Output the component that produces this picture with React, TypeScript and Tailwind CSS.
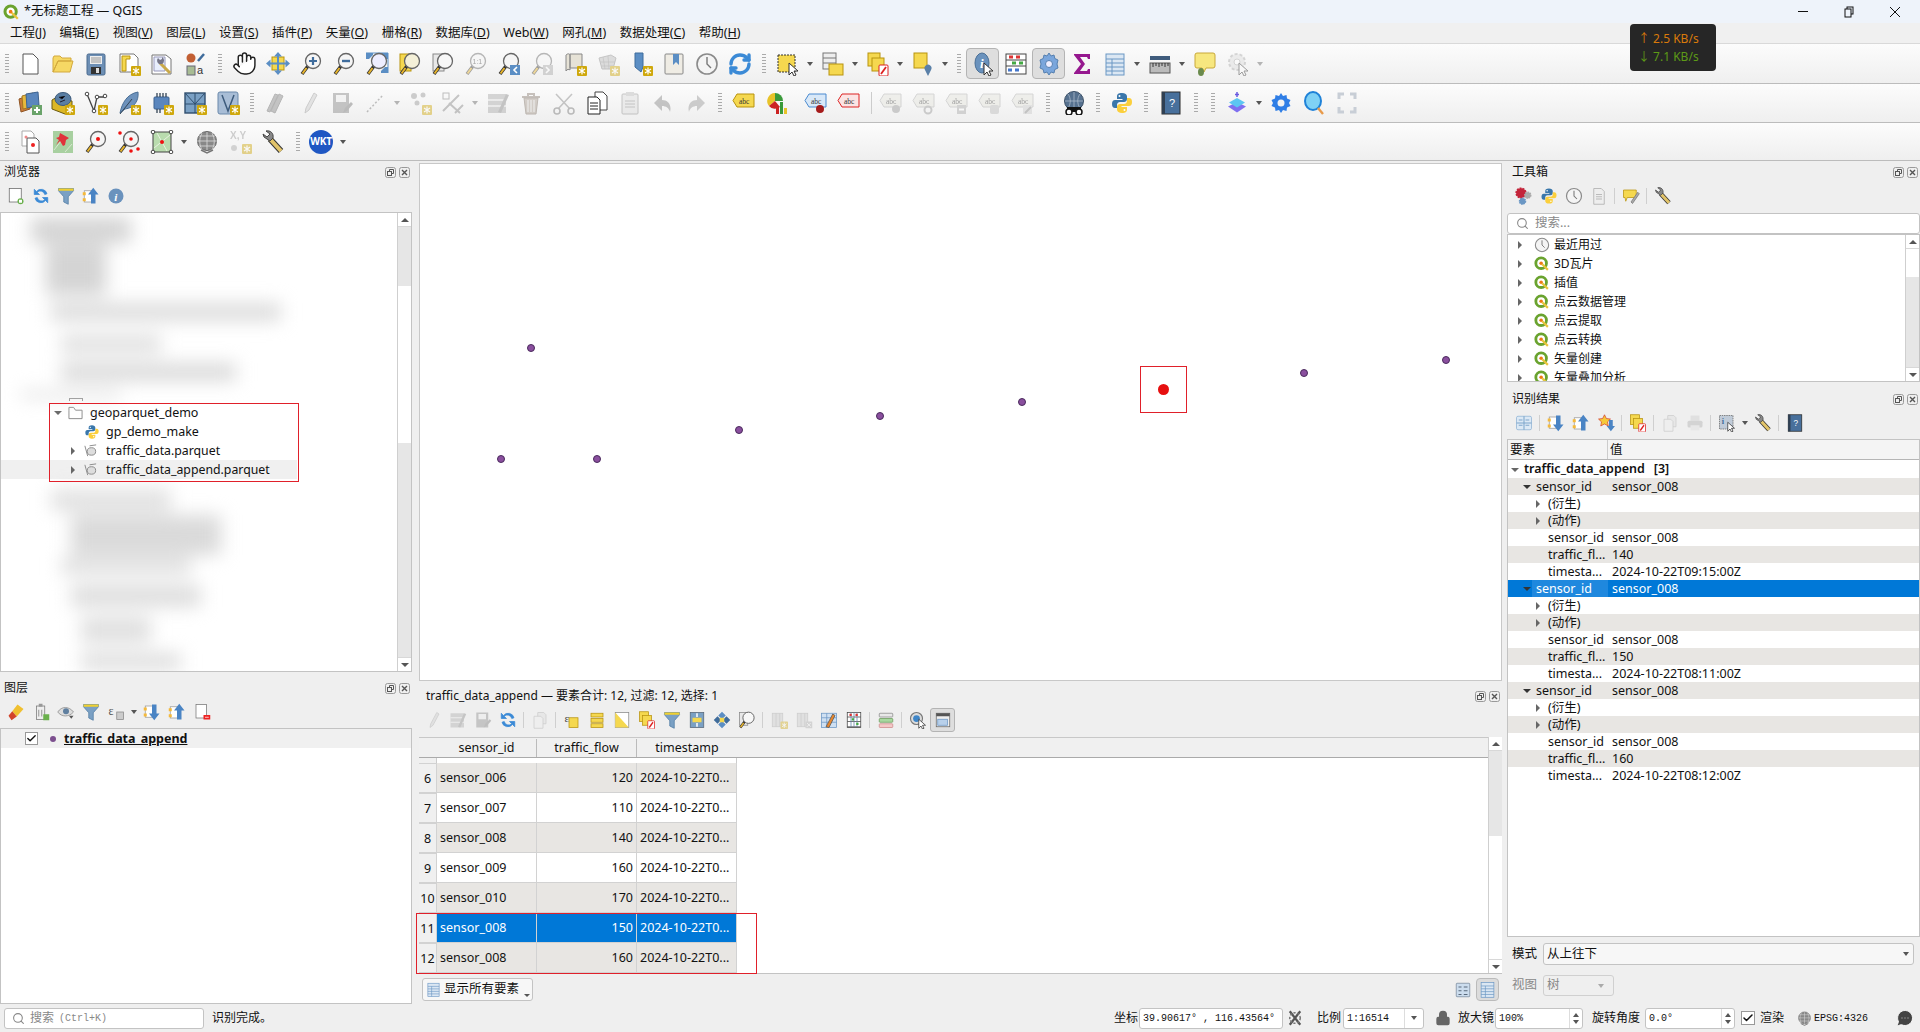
import { ReactNode } from "react";
import { Hand, RefreshCw, Search, Lock, Check, MessageCircleMore } from "lucide-react";
import clsx from "clsx";

const Y = "#f5d84f";
const YS = "#b8930f";
const B = "#5b8ec4";
const BD = "#3f6c9c";

const Star = (
  <g>
    <rect x="14" y="14" width="10" height="10" rx="1" fill="#cfa80c" />
    <path d="M19 15.5v7M16 17l6 4M22 17l-6 4" stroke="#fff" strokeWidth="1.2" />
  </g>
);
const mg = (c = "#f5f5f5") => (
  <g>
    <path d="M9 14L3 22" stroke="#333" strokeWidth="3.5" />
    <path d="M7.5 16L3.5 21.5" stroke="#e8b52c" strokeWidth="2" />
    <circle cx="14" cy="9" r="7.5" fill={c} stroke="#666" strokeWidth="1.3" />
  </g>
);
const Py = (
  <g>
    <path d="M12 2C8 2 7 3.5 7 5.5V8h5.5v1H5C3 9 2 10.5 2 13s1 4 3 4h2v-3c0-2 1.5-3 3-3h4c1.5 0 3-1 3-3V5.5C17 3.5 15 2 12 2z" fill="#3a77ab" />
    <path d="M12 2C8 2 7 3.5 7 5.5V8h5.5v1H5C3 9 2 10.5 2 13s1 4 3 4h2v-3c0-2 1.5-3 3-3h4c1.5 0 3-1 3-3V5.5C17 3.5 15 2 12 2z" fill="#fbcf3c" transform="rotate(180 12 12)" />
    <circle cx="9.5" cy="5" r="1" fill="#fff" />
    <circle cx="14.5" cy="19" r="1" fill="#fff" />
  </g>
);
const Qg = (
  <g>
    <circle cx="11.5" cy="11.5" r="7.5" fill="#fff" stroke="#6aa32f" strokeWidth="4" />
    <circle cx="11.5" cy="11.5" r="2.5" fill="#ee7913" />
    <path d="M13 13l8 8" stroke="#e8c33c" strokeWidth="3" />
  </g>
);
const abc = (c: string, f: string) => (
  <g>
    <path d="M5 3h17v13H5L1 9.5z" fill={f} stroke={c} />
    <text x="7" y="12.5" fontSize="7.5" fontFamily="Liberation Serif, serif" fill="#333">abc</text>
  </g>
);
const Gear = (
  <g>
    <path d="M12 2l2 3 3.5-1 .5 3.5L21.5 9 20 12l1.5 3-3.5 1.5-.5 3.5L14 19l-2 3-2-3-3.5 1L6 16.5 2.5 15 4 12 2.5 9 6 7.5 6.5 4 10 5z" fill="#2f7ee6" />
    <circle cx="12" cy="12" r="3.5" fill="#f2f2f2" />
  </g>
);
const Curs = <path d="M13 11l0 12 3-3 2 4 2-1-2-4h4z" fill="#fff" stroke="#333" />;

const ic: Record<string, ReactNode> = {
  new: <path d="M5 2h10l5 5v15H5z" fill="#fff" stroke="#555" />,
  open: <path d="M2 20V6l1-2h6l2 2h9v3H7L2 20zM2 20l5-11h15l-3 11z" fill="#f6d864" stroke="#d3a93d" />,
  save: <g><rect x="3" y="2" width="18" height="21" rx="1.5" fill="#6d8fb5" stroke="#4a6a8e" /><rect x="6" y="4" width="12" height="8" fill="#eee" /><path d="M7 6h10M7 8h10M7 10h10" stroke="#999" /><rect x="7" y="15" width="10" height="7" fill="#333" /><rect x="12" y="16" width="3" height="5" fill="#ddd" /></g>,
  layout: <g><path d="M3 2h14l4 4v14H3z" fill="#fff" stroke="#777" /><path d="M5 4h8v3H9v12H5z" fill={Y} stroke={YS} />{Star}</g>,
  manager: <g><path d="M2 3h14l5 4v15H2z" fill="#fff" stroke="#777" /><path d="M4 5h11v14H4z" fill="#e8eefc" stroke="#99b" /><path d="M10 11l10 10" stroke="#c9a94a" strokeWidth="3" /><path d="M9 12a4 4 0 0 1-1-6l2 2 2-1 0-2a4 4 0 0 1 0 7z" fill="#778" /></g>,
  style: <g><circle cx="8" cy="6" r="4.5" fill="#c25f33" /><path d="M15 9l6-7" stroke={BD} strokeWidth="2.5" /><rect x="4" y="14" width="8" height="9" fill="#a8bc94" stroke="#667" /><text x="14" y="22" fontSize="11" fill="#333" fontFamily="Liberation Sans">a</text></g>,
  pan: <g><rect x="6" y="5" width="12" height="13" fill={Y} stroke={YS} /><path d="M12 0l4 4.5H8zM12 23l4-4.5H8zM0 11.5L4.5 7.5v8zM24 11.5l-4.5-4v8z" fill={B} /><path d="M12 2v20M2 11.5h20" stroke={B} strokeWidth="2" /></g>,
  zoomIn: <g>{mg()}<path d="M14 5v8M10 9h8" stroke={BD} strokeWidth="2.2" /></g>,
  zoomOut: <g>{mg()}<path d="M10 9h8" stroke={BD} strokeWidth="2.4" /></g>,
  zoomFull: <g><path d="M1 1h7v2L4 7H1zM23 1h-7v2l4 4h3zM23 21h-7v-2l4-4h3z" fill={B} /><path d="M1 1h22v20" fill="none" stroke={B} />{mg("#eef")}</g>,
  zoomLayer: <g><rect x="2" y="2" width="11" height="17" fill={Y} stroke={YS} />{mg("#f4f0d8")}</g>,
  zoomSel: <g><rect x="2" y="2" width="11" height="17" fill="#e8e8e8" stroke="#888" />{mg("#f8f8f8")}</g>,
  zoom11: <g>{mg()}<text x="8.5" y="12" fontSize="7" fill="#444" fontFamily="Liberation Sans">1:1</text></g>,
  zoomLast: <g>{mg()}<rect x="13" y="13" width="10" height="10" fill={B} /><path d="M20 15l-3 3 3 3" stroke="#fff" strokeWidth="1.6" fill="none" /></g>,
  zoomNext: <g>{mg()}<rect x="13" y="13" width="10" height="10" fill="#aaa" /><path d="M16 15l3 3-3 3" stroke="#fff" strokeWidth="1.6" fill="none" /></g>,
  mapNew: <g><path d="M3 3c2-2 4-1 4 0v15c-1-1-3-1-4 1zM7 2h12v14H7z" fill="#e6e2d6" stroke="#888" />{Star}</g>,
  map3d: <g><path d="M3 6l12-3 5 3-3 11H6z" fill="#bcbcbc" stroke="#888" /><path d="M7 5l2 12M12 4l1 13M4 10h15M5 14h13" stroke="#888" strokeWidth=".7" />{Star}</g>,
  bmNew: <g><path d="M6 1h8v14l-2 5-6-5z" fill={B} stroke={BD} />{Star}</g>,
  bm: <g><rect x="3" y="2" width="18" height="20" rx="1" fill="#efece4" stroke="#888" /><path d="M11 2h6v11l-3-3-3 3z" fill={B} /></g>,
  clock: <g><circle cx="12" cy="12" r="10" fill="#f4f4f4" stroke="#8a8a8a" strokeWidth="1.6" /><path d="M12 5v7l4 4" stroke="#777" strokeWidth="1.4" fill="none" /></g>,
  select: <g><rect x="2" y="3" width="17" height="17" fill={Y} stroke="#333" strokeDasharray="2 1" />{Curs}</g>,
  selAttr: <g><rect x="2" y="1" width="13" height="16" fill="#eee" stroke="#777" /><path d="M2 6h13M2 11h13" stroke="#777" /><rect x="8" y="12" width="14" height="11" fill={Y} stroke={YS} /></g>,
  deselect: <g><rect x="2" y="1" width="12" height="13" fill={Y} stroke={YS} /><rect x="6" y="6" width="12" height="13" fill={Y} stroke={YS} /><rect x="13" y="13" width="9" height="11" rx="1" fill="#fff" stroke="#d22" /><path d="M15 22l5-7" stroke="#d22" strokeWidth="1.8" /></g>,
  selLoc: <g><rect x="3" y="1" width="13" height="15" fill={Y} stroke={YS} /><path d="M17 24l-3-6a3.5 3.5 0 1 1 6 0z" fill="#5a80a8" /></g>,
  identify: <g><ellipse cx="11" cy="11" rx="7" ry="10" fill="#6a92bd" stroke="#4a6f96" /><text x="9" y="15.5" fontSize="13" fontWeight="700" fill="#fff" fontStyle="italic" fontFamily="Liberation Serif">i</text>{Curs}</g>,
  abacus: <g><rect x="2" y="2" width="20" height="20" fill="#fff" stroke="#444" /><path d="M2 8h20M2 14h20" stroke="#444" /><path d="M5 5h4M12 5h4" stroke="#d33" strokeWidth="3" /><path d="M8 11h4M15 11h4" stroke="#4a4" strokeWidth="3" /><path d="M4 18h4M11 18h4" stroke="#47c" strokeWidth="3" /></g>,
  gearB: <g><path d="M12 1l2 3 3-1 .8 3.5L21 8l-1 4 1 4-3.2 1.5L17 21l-3-1-2 3-2-3-3 1-.8-3.5L3 16l1-4-1-4 3.2-1.5L7 3l3 1z" fill="#7aa6dc" stroke="#5680b0" /><circle cx="12" cy="12" r="3.5" fill="#eef" stroke="#5680b0" /></g>,
  sigma: <path d="M4 2h16v5h-2l-1-2H10l5 7-5 7h7l1-2h2v5H4v-1l7-9-7-9z" fill="#96188f" />,
  table: <g><rect x="3" y="2" width="18" height="21" fill="#dbe7f3" stroke="#6b97c4" /><path d="M3 7h18M3 11h18M3 15h18M3 19h18M9 7v16" stroke="#6b97c4" /></g>,
  measure: <g><rect x="2" y="4" width="20" height="4" fill="#3f5c7c" /><rect x="2" y="11" width="20" height="10" fill="#bbb" stroke="#555" /><path d="M5 11v4M8 11v3M11 11v4M14 11v3M17 11v4M20 11v3" stroke="#333" /></g>,
  tip: <g><path d="M4 1h16a2 2 0 0 1 2 2v11a2 2 0 0 1-2 2h-7l-2 4-2-4H4a2 2 0 0 1-2-2V3a2 2 0 0 1 2-2z" fill="#f7e77f" stroke="#c8a83a" /><ellipse cx="8" cy="20" rx="3" ry="4" fill="#6a8a4c" /></g>,
  gearG: <g><circle cx="11" cy="10" r="8" fill="#ddd" stroke="#aaa" strokeDasharray="3 2" strokeWidth="2" /><circle cx="11" cy="10" r="3" fill="#fff" stroke="#aaa" />{Curs}</g>,
  addLayer: <g><path d="M1 8l11-4v14L3 21z" fill="#c97a3a" stroke="#8f5524" /><path d="M4 5l11-3v14L5 18z" fill="#e6b93d" stroke="#a47621" /><path d="M8 3l12-2 1 13-12 3z" fill="#5a86bd" stroke="#3d6391" /><rect x="14" y="14" width="10" height="10" fill="#6aa36a" /><path d="M19 16v6M16 19h6" stroke="#fff" strokeWidth="2" /></g>,
  gpkg: <g><path d="M1 9l5-3 15 4v11l-7 2-13-5z" fill="#dcb725" stroke="#6a5a10" /><ellipse cx="12" cy="8" rx="8" ry="6.5" fill="#5a7ea3" stroke="#3d5b7c" /><path d="M8 6l3 2 3-3M9 11l5-2" stroke="#223" />{Star}</g>,
  vec: <g><path d="M3 3l7 17 3-14h8" fill="none" stroke="#444" strokeWidth="1.3" /><circle cx="3" cy="3" r="1.8" fill="#fff" stroke="#444" /><circle cx="10" cy="20" r="1.8" fill="#fff" stroke="#444" /><circle cx="13" cy="6" r="1.8" fill="#fff" stroke="#444" /><circle cx="21" cy="5" r="1.8" fill="#fff" stroke="#444" />{Star}</g>,
  feather: <g><path d="M3 22C5 12 10 3 21 1c1 9-4 16-13 17z" fill="#6d92bc" stroke="#4a6f96" /><path d="M3 23L15 8" stroke="#345" />{Star}</g>,
  chip: <g><rect x="4" y="6" width="15" height="12" rx="1" fill="#5a86bd" stroke="#3d6391" /><path d="M7 2v4M10 2v4M13 2v4M16 2v4M7 18v4M10 18v4" stroke="#345" strokeWidth="1.3" />{Star}</g>,
  mesh: <g><rect x="2" y="2" width="20" height="20" fill="#7aa0c4" stroke="#2f4e6e" strokeWidth="1.4" /><path d="M2 13h20M12 2v20M2 2l10 11M22 2L12 13" stroke="#2f4e6e" />{Star}</g>,
  virt: <g><rect x="2" y="1" width="20" height="22" rx="2" fill="#a8bdd6" stroke="#6a89ab" /><path d="M6 4l6 16 6-16" fill="none" stroke="#3d5b7c" strokeWidth="1.5" />{Star}</g>,
  pencils: <path d="M7 20L15 3l4 2-8 17zM3 20L11 3l3 1-8 17z" fill="#888" stroke="#666" />,
  pencil: <path d="M8 22l1-5L17 2l3 2-8 15z" fill="#ccc" stroke="#999" />,
  saveEd: <g><rect x="3" y="2" width="16" height="20" fill="#888" /><rect x="6" y="4" width="10" height="7" fill="#eee" /><path d="M13 22l2-5 6-6 2 2-6 7z" fill="#777" /></g>,
  line: <path d="M4 21L20 4" stroke="#777" strokeDasharray="2 2" strokeWidth="1.5" />,
  pts: <g><circle cx="6" cy="5" r="3" fill="#999" /><circle cx="15" cy="4" r="2.5" fill="#999" /><circle cx="9" cy="12" r="2.5" fill="#999" />{Star}</g>,
  edit: <g><rect x="2" y="2" width="6" height="6" fill="none" stroke="#777" /><path d="M2 20L18 4M8 12l11 10M14 22l8-8" stroke="#888" strokeWidth="2" /></g>,
  tblPen: <g><rect x="2" y="3" width="18" height="19" fill="#aaa" /><path d="M2 9h18M2 15h18" stroke="#eee" strokeWidth="1.5" /><path d="M12 21L20 3l3 1-8 18z" fill="#888" /></g>,
  trash: <g><path d="M3 6h18M9 6V3h6v3" stroke="#8a7d72" strokeWidth="2" fill="none" /><path d="M5 7h14l-2 16H7z" fill="#a89c90" stroke="#7a6d60" /><path d="M9 9v12M12 9v12M15 9v12" stroke="#eee" /></g>,
  cut: <g><path d="M4 3l14 15M20 3L6 18" stroke="#888" strokeWidth="1.6" /><circle cx="5" cy="20" r="3" fill="none" stroke="#777" strokeWidth="1.6" /><circle cx="19" cy="20" r="3" fill="none" stroke="#777" strokeWidth="1.6" /></g>,
  copy: <g><path d="M10 1h8l4 4v14H10z" fill="#fff" stroke="#444" /><path d="M3 6h9l3 3v14H3z" fill="#fff" stroke="#222" /><path d="M5 12h8M5 15h8M5 18h8" stroke="#222" /></g>,
  paste: <g><rect x="4" y="3" width="16" height="20" rx="1" fill="#ddd" stroke="#888" /><rect x="8" y="1" width="8" height="4" fill="#bbb" /><path d="M7 10h10M7 13h10M7 16h10" stroke="#888" /></g>,
  undo: <path d="M11 4L3 12l8 8v-5c4 0 7 2 8 6 2-7-2-12-8-12z" fill="#888" />,
  redo: <path d="M13 4l8 8-8 8v-5c-4 0-7 2-8 6-2-7 2-12 8-12z" fill="#999" />,
  abcY: abc("#b8930f", Y),
  diagram: <g><path d="M10 2a8 8 0 0 1 8 8h-8z" fill="#3a9a3a" /><path d="M10 2a8 8 0 0 0-6 13l6-5z" fill="#e8c32a" /><path d="M4 15a8 8 0 0 0 11 1l-5-6z" fill="#c22" /><rect x="11" y="15" width="3" height="8" fill="#c22" /><rect x="15" y="11" width="3" height="12" fill="#3a9a3a" /><rect x="19" y="17" width="3" height="6" fill="#e8c32a" /></g>,
  abcPin: <g>{abc("#4a8ad0", "#d8e8f8")}<circle cx="16" cy="18" r="4" fill="#a61b1b" /></g>,
  abcRed: abc("#d22", "#fbe4e4"),
  abcG1: <g>{abc("#aaa", "#e4e4dc")}<circle cx="17" cy="18" r="4" fill="#999" /></g>,
  abcG2: <g>{abc("#aaa", "#e4e4dc")}<circle cx="16" cy="19" r="3.5" fill="none" stroke="#999" strokeWidth="2" /></g>,
  abcG3: <g>{abc("#aaa", "#e4e4dc")}<rect x="12" y="14" width="9" height="9" fill="#aaa" /><path d="M14 18.5h5" stroke="#fff" strokeWidth="2" /></g>,
  abcG4: <g>{abc("#aaa", "#e4e4dc")}<rect x="12" y="14" width="9" height="9" rx="2" fill="#bbb" /></g>,
  abcG5: <g>{abc("#aaa", "#e4e4dc")}<rect x="12" y="14" width="9" height="9" fill="#ccc" /><path d="M14 22l6-6" stroke="#888" strokeWidth="2" /></g>,
  globeBin: <g><circle cx="12" cy="10" r="9.5" fill="#56718f" stroke="#3a4f66" /><path d="M3 10h18M12 1v18M6 3c3 4 3 10 0 14M18 3c-3 4-3 10 0 14" stroke="#a9b9c9" strokeWidth=".8" fill="none" /><path d="M5 16h14v5H5z" fill="#111" /><circle cx="7" cy="21" r="3" fill="#fff" stroke="#111" strokeWidth="1.5" /><circle cx="17" cy="21" r="3" fill="#fff" stroke="#111" strokeWidth="1.5" /></g>,
  py: Py,
  help: <g><rect x="3" y="1" width="18" height="22" fill="#48709c" stroke="#2b2b2b" /><rect x="3" y="1" width="3" height="22" fill="#2f3f52" /><text x="10" y="16" fontSize="11" fill="#fff" fontFamily="Liberation Sans">?</text></g>,
  plug: <g><path d="M12 11l9 4.5-9 6-9-6z" fill="#7f6ff0" /><path d="M12 7l8 4.5-8 5-8-5z" fill="#5cc6f2" /><path d="M12 1v5M10 3.5h4" stroke="#6a5ae0" strokeWidth="1.5" /></g>,
  gearQ: Gear,
  searchB: <g><ellipse cx="11" cy="10" rx="8" ry="9" fill="#7fd1f5" stroke="#1f82d8" strokeWidth="2" /><path d="M16 17l5 6" stroke="#e89a4a" strokeWidth="2.4" /></g>,
  full: <path d="M4 8V3h5M15 3h5v5M20 16v5h-5M9 21H4v-5" fill="none" stroke="#c8ced6" strokeWidth="3" />,
  copyPts: <g><path d="M4 1h9l3 3v12H4z" fill="#fff" stroke="#aaa" /><path d="M9 8h9l3 3v12H9z" fill="#fff" stroke="#555" /><circle cx="15" cy="15" r="2" fill="#e22" /><circle cx="8" cy="7" r="1.5" fill="#e88" /></g>,
  pin: <g><path d="M2 1h20v22H2z" fill="#a8d0a0" /><path d="M3 20l7-9M14 22l7-8" stroke="#d8e8d0" /><path d="M9 3l9 5-3 2-1 5-2 1-3-5-4 4 3-5-3-2 3-1z" fill="#e0323a" /></g>,
  magDot: <g>{mg()}<circle cx="14" cy="9" r="2" fill="#e11" /></g>,
  magDots: <g>{mg()}<circle cx="14" cy="9" r="1.8" fill="#e11" /><circle cx="3" cy="3" r="1.8" fill="#e11" /><circle cx="21" cy="19" r="1.8" fill="#e11" /><circle cx="14" cy="21" r="1.8" fill="#e11" /></g>,
  extent: <g><rect x="3" y="2" width="18" height="20" fill="#b9dcae" stroke="#444" /><path d="M4 18L20 5M7 3l10 18" stroke="#e8f2e0" /><circle cx="12" cy="12" r="2" fill="#e11" /><circle cx="3" cy="2" r="1.8" fill="#fff" stroke="#444" /><circle cx="21" cy="2" r="1.8" fill="#fff" stroke="#444" /><circle cx="3" cy="22" r="1.8" fill="#fff" stroke="#444" /><circle cx="21" cy="22" r="1.8" fill="#fff" stroke="#444" /></g>,
  globeG: <g><circle cx="12" cy="11" r="9.5" fill="#888" stroke="#666" /><path d="M2 11h20M4 6h16M4 16h16M12 2v18M7 3c-3 6-3 11 0 17M17 3c3 6 3 11 0 17" stroke="#ddd" strokeWidth=".8" fill="none" /><path d="M6 20l6 3 6-3" stroke="#777" strokeWidth="1.5" fill="none" /></g>,
  xy: <g><text x="2" y="9" fontSize="10" fontWeight="700" fill="#999" fontFamily="Liberation Sans">X,Y</text><circle cx="6" cy="18" r="3" fill="#aaa" />{Star}</g>,
  wrench: <g><path d="M9 9l11 12" stroke="#333" strokeWidth="6" /><path d="M9 9l11 12" stroke="#e2c46a" strokeWidth="4" /><path d="M9 11L3 7l-1-3 4 3 3-3-4-3c4-1 8 2 7 7z" fill="#888" stroke="#444" /></g>,
  collapse: <g><rect x="2" y="3" width="20" height="18" rx="2" fill="#dce9f5" stroke="#8db2d3" /><path d="M5 8h5M5 15h5M14 8h5M14 15h5M2 12h20M12 3v18" stroke="#7da6cb" strokeWidth="1.4" /></g>,
  down: <g><rect x="3" y="4" width="10" height="15" fill="#fff" stroke="#999" /><rect x="1" y="6" width="4" height="4" fill="#f5b93a" /><rect x="1" y="14" width="4" height="4" fill="#f5b93a" /><path d="M12 2h6v12h4l-7 9-7-9h4z" fill="#4a84c4" /></g>,
  up: <g><rect x="3" y="5" width="10" height="15" fill="#fff" stroke="#999" /><rect x="1" y="7" width="4" height="4" fill="#f5b93a" /><rect x="1" y="15" width="4" height="4" fill="#f5b93a" /><path d="M12 22h6V10h4L15 1 8 10h4z" fill="#4a84c4" /></g>,
  starD: <g><path d="M10 1l2.5 5 5.5.7-4 3.8 1 5.5-5-2.7-5 2.7 1-5.5-4-3.8 5.5-.7z" fill="#f5c93a" stroke="#c22" strokeWidth=".8" /><path d="M16 8h5v8h3l-5.5 7-5.5-7h3z" fill="#4a84c4" /></g>,
  print: <g><rect x="6" y="2" width="12" height="7" fill="#ccc" /><rect x="2" y="9" width="20" height="9" rx="2" fill="#aaa" /><rect x="6" y="15" width="12" height="7" fill="#ddd" /></g>,
  identSel: <g><rect x="2" y="2" width="18" height="18" fill="#c0cbd8" stroke="#666" strokeDasharray="2 1" /><text x="5" y="13" fontSize="11" fontWeight="700" fill="#3f6c9c" fontFamily="Liberation Serif">i</text>{Curs}</g>,
  procs: <g><circle cx="8" cy="8" r="6.5" fill="#c3243a" stroke="#c3243a" strokeDasharray="2.5 1.5" strokeWidth="2" /><circle cx="17" cy="11" r="4" fill="#aaa" stroke="#aaa" strokeDasharray="2 1" strokeWidth="2" /><circle cx="10" cy="19" r="4" fill="#6b97c4" stroke="#6b97c4" strokeDasharray="2 1" strokeWidth="2" /></g>,
  page: <g><path d="M5 2h10l4 4v17H5z" fill="#eee" stroke="#aaa" /><path d="M8 10h8M8 13h8M8 16h8" stroke="#aaa" /></g>,
  tipPen: <g><path d="M2 4h17v10H7l-2 5-1-5H2z" fill={Y} stroke={YS} /><path d="M12 20L21 7l2 2-9 13z" fill="#aaa" stroke="#777" /></g>,
  newBox: <g><rect x="3" y="2" width="16" height="18" fill="#fff" stroke="#666" /><circle cx="18" cy="19" r="4" fill="#6ab04c" /><rect x="16" y="17" width="4" height="4" fill="#fff" /></g>,
  filter: <g><path d="M2 2h20v3l-7 8v10l-6-3v-7L2 5z" fill="#7aa0c4" stroke="#4f7ba3" /><rect x="2" y="2" width="20" height="3" fill="#f0d030" /></g>,
  info: <g><circle cx="12" cy="12" r="10" fill="#6a92bd" /><text x="9.5" y="18" fontSize="15" fontWeight="700" fontStyle="italic" fill="#fff" fontFamily="Liberation Serif">i</text></g>,
  brush: <g><path d="M14 2l8 6-9 10-6-7z" fill="#f0c030" /><path d="M7 11l6 7-7 5-4-6z" fill="#d2432a" /></g>,
  addGroup: <g><rect x="6" y="4" width="11" height="18" fill="#eee" stroke="#777" /><rect x="9" y="1" width="5" height="4" fill="#999" /><path d="M9 9v9M13 9v9" stroke="#777" /><rect x="15" y="15" width="8" height="8" fill="#6ab04c" /></g>,
  eye: <g><path d="M1 12c5-8 15-8 21 0-6 7-16 7-21 0z" fill="#ddd" stroke="#888" /><circle cx="12" cy="11" r="4" fill="#5f7f9f" /><path d="M16 17l3 4 3-4" fill="#555" /></g>,
  noRender: <g><path d="M5 3l14 18M19 3L5 21" stroke="#555" strokeWidth="3" /><circle cx="12" cy="12" r="7" fill="none" stroke="#777" strokeWidth="2" strokeDasharray="3 2" /></g>,
  expr: <g><text x="2" y="16" fontSize="16" fontFamily="Liberation Serif" fill="#555">ε</text><rect x="13" y="12" width="9" height="10" fill="#ccc" stroke="#888" /></g>,
  exprY: <g><rect x="8" y="9" width="12" height="13" fill={Y} stroke={YS} /><text x="2" y="14" fontSize="15" fontFamily="Liberation Serif" fill="#444">ε</text></g>,
  remove: <g><rect x="4" y="2" width="14" height="18" fill="#fff" stroke="#777" /><rect x="14" y="16" width="9" height="6" fill="#e22" /><path d="M16 19h5" stroke="#fff" /></g>,
  copyG: <g><path d="M9 2h8l3 3v12H9z" fill="#ddd" stroke="#999" /><path d="M4 7h9l3 3v13H4z" fill="#eee" stroke="#999" /></g>,
  bars: <g><rect x="4" y="3" width="16" height="5" fill={Y} stroke={YS} /><rect x="4" y="10" width="16" height="5" fill={Y} stroke={YS} /><rect x="4" y="17" width="16" height="5" fill={Y} stroke={YS} /></g>,
  invert: <g><rect x="3" y="2" width="18" height="20" fill="#fff" stroke="#888" /><path d="M3 2l18 20H3z" fill={Y} /></g>,
  moveSel: <g><rect x="3" y="2" width="18" height="20" fill="#7aa0c4" stroke="#567" /><rect x="6" y="9" width="12" height="6" fill={Y} /><path d="M12 3v5M12 16v5" stroke="#fff" strokeWidth="2" /></g>,
  panSel: <g><path d="M12 1l5 5-5 5-5-5zM12 13l5 5-5 5-5-5z" fill={B} /><path d="M6 7l5 5-5 5-5-5zM18 7l5 5-5 5-5-5z" fill={BD} /><rect x="9" y="9" width="6" height="6" fill={Y} /></g>,
  newCol: <g><rect x="3" y="3" width="14" height="18" fill="#ccc" stroke="#999" /><path d="M8 3v18M13 3v18" stroke="#999" />{Star}</g>,
  delCol: <g><rect x="3" y="3" width="14" height="18" fill="#ccc" stroke="#999" /><path d="M8 3v18M13 3v18" stroke="#999" /><rect x="14" y="14" width="9" height="9" fill="#aaa" /><path d="M16 16l5 5M21 16l-5 5" stroke="#fff" /></g>,
  calcPen: <g><rect x="2" y="3" width="20" height="19" fill="#cfe0f2" stroke="#6b97c4" /><path d="M2 9h20M2 15h20M9 3v19" stroke="#6b97c4" /><path d="M8 21L17 4l3 2-8 16z" fill="#e8872e" stroke="#555" /></g>,
  calc: <g><rect x="3" y="2" width="18" height="20" fill="#fff" stroke="#444" /><path d="M3 8h18M3 14h18M3 21h18" stroke="#444" /><path d="M8 2v19M12 2v19M16 2v19" stroke="#5f7fa8" /><path d="M6 5h3M14 5h3" stroke="#d33" strokeWidth="3" /><path d="M9 11h3M15 17h3" stroke="#4a4" strokeWidth="3" /></g>,
  cols: <g><rect x="3" y="3" width="18" height="5" rx="1" fill="#e8e8e8" stroke="#888" /><rect x="3" y="10" width="18" height="5" rx="1" fill="#a8d8a0" stroke="#6a9a5a" /><rect x="3" y="17" width="18" height="5" rx="1" fill="#f4c8c8" stroke="#c88" /></g>,
  magCur: <g><circle cx="10" cy="10" r="8" fill="#ddd" stroke="#777" strokeWidth="1.5" /><circle cx="10" cy="10" r="4.5" fill="#3f86c8" />{Curs}</g>,
  tblDock: <g><rect x="3" y="3" width="18" height="18" fill="#eee" stroke="#666" /><rect x="3" y="3" width="18" height="4" fill="#555" /><rect x="5" y="11" width="13" height="8" fill="#b8d0ea" stroke="#6b97c4" /></g>,
  tblForm: <g><rect x="3" y="3" width="18" height="18" rx="1" fill="#cde" stroke="#789" /><path d="M6 8h4M13 8h5M6 13h4M13 13h5M6 18h4M13 18h5" stroke="#567" strokeWidth="1.3" /></g>,
  refresh2: <g><path d="M20 9a8 8 0 0 0-14-3L3 3v7h7L7 7a6 6 0 0 1 10 3zM4 15a8 8 0 0 0 14 3l3 3v-7h-7l3 3a6 6 0 0 1-10-3z" fill="#3b8ad6" stroke="#3b8ad6" /></g>,
};

const Ico = ({ i, className }: { i: string; className?: string }) => (
  <svg viewBox="0 0 24 24" className={clsx("shrink-0", className ?? "h-6 w-6")}>
    {ic[i]}
  </svg>
);

// big toolbar button
const Btn = ({ i, off, on }: { i?: string; off?: boolean; on?: boolean }) => (
  <div className={clsx("flex h-[31px] w-[33px] shrink-0 items-center justify-center rounded-sm", on && "border border-[#b4b4b4] bg-[#dedede]")}>
    {i === "hand" ? (
      <Hand size={25} fill="#fff" stroke="#222" strokeWidth={1.4} />
    ) : i === "refresh" ? (
      <RefreshCw size={24} stroke="#3b8ad6" strokeWidth={3.4} />
    ) : (
      <Ico i={i ?? "new"} className={clsx("h-6 w-6", off && "opacity-45")} />
    )}
  </div>
);

// little triangle next to a button
const Dd = ({ off, className }: { off?: boolean; className?: string }) => (
  <div className={clsx("flex shrink-0 items-center justify-center", className ?? "w-[12px]")}>
    <div className={clsx("h-0 w-0 border-x-[3.5px] border-t-[4px] border-x-transparent", off ? "border-t-[#b4b4b4]" : "border-t-[#555]")} />
  </div>
);

const Grip = ({ className }: { className?: string }) => (
  <div className={clsx("flex shrink-0 justify-center", className ?? "w-[15px]")}>
    <div className="h-[22px] w-[4px] bg-[radial-gradient(#aaa_0.6px,transparent_0.8px)] bg-[length:2px_3px]" />
  </div>
);

const Bar = ({ children, className }: { children: ReactNode; className?: string }) => (
  <div className={clsx("flex shrink-0 items-center border-b border-[#bcbcbc] bg-linear-to-b from-[#fcfcfc] to-[#efefef] pl-px", className)}>{children}</div>
);

const DockTitle = ({ title, className }: { title: string; className?: string }) => (
  <div className={clsx("flex h-[22px] shrink-0 items-center justify-between text-[12px] text-[#111]", className)}>
    <span>{title}</span>
    <div className="flex gap-[3px] pr-[2px]">
      <svg viewBox="0 0 11 11" className="h-[11px] w-[11px]" fill="none" stroke="#555">
        <rect x=".5" y=".5" width="10" height="10" rx="2" stroke="#999" />
        <rect x="2.5" y="4.5" width="4" height="4" />
        <path d="M4.5 4V2.5h4v4H7" />
      </svg>
      <svg viewBox="0 0 11 11" className="h-[11px] w-[11px]" fill="none" stroke="#555">
        <rect x=".5" y=".5" width="10" height="10" rx="2" stroke="#999" />
        <path d="M3 3l5 5M8 3l-5 5" strokeWidth="1.4" />
      </svg>
    </div>
  </div>
);

// small toolbar of a dock: "~name" disabled, "!name" pressed, 0 separator, 1 drop arrow
const Tb = ({ items, className }: { items: (string | number)[]; className?: string }) => (
  <div className={clsx("flex h-[29px] shrink-0 items-center pb-[3px]", className)}>
    {items.map((it, n) =>
      typeof it === "number" ? (
        it === 0 ? (
          <div key={n} className="mx-[3px] h-[16px] w-px shrink-0 bg-[#cfcfcf]" />
        ) : (
          <Dd key={n} className="w-[11px]" />
        )
      ) : (
        <div key={n} className={clsx("flex h-[24px] w-[25px] shrink-0 items-center justify-center", it.startsWith("!") && "rounded-[3px] border border-[#b4b4b4] bg-[#dedede]")}>
          <Ico i={it.replace(/[~!]/, "")} className={clsx("h-[18px] w-[18px]", it.startsWith("~") && "opacity-40")} />
        </div>
      ),
    )}
  </div>
);

const Arrow = ({ open, light, className }: { open?: boolean; light?: boolean; className?: string }) => (
  <div className={clsx("flex h-[9px] w-[9px] shrink-0 items-center justify-center", className)}>
    {open ? (
      <div className={clsx("h-0 w-0 border-x-[4px] border-t-[4px] border-x-transparent", light ? "border-t-[#333]" : "border-t-[#666]")} />
    ) : (
      <div className="h-0 w-0 border-y-[4px] border-l-[4px] border-y-transparent border-l-[#666]" />
    )}
  </div>
);

const VScroll = ({ children }: { children: ReactNode }) => (
  <div className="flex w-[14px] shrink-0 flex-col border-l border-[#cfcfcf] bg-white">
    <div className="flex h-[14px] shrink-0 items-center justify-center border-b border-[#d8d8d8]">
      <div className="h-0 w-0 border-x-[4px] border-b-[4px] border-x-transparent border-b-[#555]" />
    </div>
    <div className="flex min-h-0 flex-1 flex-col">{children}</div>
    <div className="flex h-[14px] shrink-0 items-center justify-center border-t border-[#d8d8d8]">
      <div className="h-0 w-0 border-x-[4px] border-t-[4px] border-x-transparent border-t-[#555]" />
    </div>
  </div>
);

const MENUS: [string, string][] = [
  ["工程", "J"], ["编辑", "E"], ["视图", "V"], ["图层", "L"], ["设置", "S"], ["插件", "P"], ["矢量", "O"], ["栅格", "R"], ["数据库", "D"], ["Web", "W"], ["网孔", "M"], ["数据处理", "C"], ["帮助", "H"],
];

const POINTS = [
  [111, 184], [81, 295], [177, 295], [319, 266], [460, 252], [602, 238], [884, 209], [1026, 196],
];

const TABLE = [
  ["6", "sensor_006", "120"], ["7", "sensor_007", "110"], ["8", "sensor_008", "140"], ["9", "sensor_009", "160"], ["10", "sensor_010", "170"], ["11", "sensor_008", "150"], ["12", "sensor_008", "160"],
];

const TOOLBOX: [string, boolean][] = [
  ["最近用过", false], ["3D瓦片", true], ["插值", true], ["点云数据管理", true], ["点云提取", true], ["点云转换", true], ["矢量创建", true], ["矢量叠加分析", true],
];

const feature = (sel: boolean, flow: string, time: string) => [
  { arrow: 1, label: "sensor_id", value: "sensor_008", sel },
  { arrow: 2, label: "(衍生)" },
  { arrow: 2, label: "(动作)" },
  { label: "sensor_id", value: "sensor_008" },
  { label: "traffic_fl...", value: flow },
  { label: "timesta...", value: time },
];
const RESULTS: { arrow?: number; label: string; value?: string; sel?: boolean }[] = [
  ...feature(false, "140", "2024-10-22T09:15:00Z"),
  ...feature(true, "150", "2024-10-22T08:11:00Z"),
  ...feature(false, "160", "2024-10-22T08:12:00Z"),
];

const mono = "font-['Liberation_Mono','Noto_Sans_CJK_SC',monospace] text-[10px]";
const Spin = () => (
  <div className="flex h-full w-[13px] flex-col items-center justify-center gap-[3px] border-l border-[#ddd]">
    <div className="h-0 w-0 border-x-[3px] border-b-[4px] border-x-transparent border-b-[#555]" />
    <div className="h-0 w-0 border-x-[3px] border-t-[4px] border-x-transparent border-t-[#555]" />
  </div>
);

const App = () => {
  return (
    <div className="flex h-[1032px] w-[1920px] flex-col overflow-hidden bg-[#efefef] font-['Noto_Sans','Noto_Sans_CJK_SC',sans-serif] text-[13px] text-[#111]">
      {/* title bar */}
      <div className="flex h-[23px] shrink-0 items-center bg-[#eef3fa] pl-[2px]">
        <svg viewBox="0 0 24 24" className="h-[18px] w-[18px]">{Qg}</svg>
        <span className="ml-[4px] text-[12.5px]">*无标题工程 — QGIS</span>
        <div className="ml-auto flex items-center gap-[35px] pr-[20px]">
          <div className="h-px w-[10px] bg-[#111]" />
          <svg viewBox="0 0 12 12" className="h-[12px] w-[12px]" fill="#eef3fa" stroke="#111">
            <rect x="4" y="1" width="6" height="7" />
            <rect x="2" y="3" width="6" height="8" />
          </svg>
          <svg viewBox="0 0 10 10" className="h-[10px] w-[10px]" stroke="#111">
            <path d="M0 0l10 10M10 0L0 10" />
          </svg>
        </div>
      </div>
      {/* menu */}
      <div className="relative flex h-[21px] shrink-0 items-center gap-[13.6px] border-b border-[#d9d9d9] bg-[#f0f0f0] pl-[10px] pt-px text-[12.5px]">
        {MENUS.map(([m, k]) => (
          <span key={k}>
            {m}(<u>{k}</u>)
          </span>
        ))}
        <div className="absolute left-[1630px] top-px z-10 flex h-[47px] w-[86px] flex-col justify-center gap-[2px] rounded-sm bg-[#262626] pl-[8px] text-[12px] leading-[16px]">
          <span className="text-[#d97a0a]">↑ 2.5 KB/s</span>
          <span className="text-[#5d9a16]">↓ 7.1 KB/s</span>
        </div>
      </div>
      {/* toolbars */}
      <Bar className="h-[40px]">
        <Grip className="w-[12px]" />
        <Btn i="new" /><Btn i="open" /><Btn i="save" /><Btn i="layout" /><Btn i="manager" /><Btn i="style" />
        <Grip className="w-[17px]" />
        <Btn i="hand" /><Btn i="pan" /><Btn i="zoomIn" /><Btn i="zoomOut" /><Btn i="zoomFull" /><Btn i="zoomLayer" /><Btn i="zoomSel" /><Btn i="zoom11" off /><Btn i="zoomLast" /><Btn i="zoomNext" off /><Btn i="mapNew" /><Btn i="map3d" off /><Btn i="bmNew" /><Btn i="bm" /><Btn i="clock" /><Btn i="refresh" />
        <Grip />
        <Btn i="select" /><Dd /><Btn i="selAttr" /><Dd /><Btn i="deselect" /><Dd /><Btn i="selLoc" /><Dd />
        <Grip />
        <Btn i="identify" on /><Btn i="abacus" /><Btn i="gearB" on /><Btn i="sigma" /><Btn i="table" /><Dd /><Btn i="measure" /><Dd /><Btn i="tip" /><Btn i="gearG" off /><Dd off />
      </Bar>
      <Bar className="h-[39px]">
        <Grip className="w-[12px]" />
        <Btn i="addLayer" /><Btn i="gpkg" /><Btn i="vec" /><Btn i="feather" /><Btn i="chip" /><Btn i="mesh" /><Btn i="virt" />
        <Grip />
        <Btn i="pencils" off /><Btn i="pencil" off /><Btn i="saveEd" off /><Btn i="line" off /><Dd off /><Btn i="pts" off /><Btn i="edit" off /><Dd off /><Btn i="tblPen" off /><Btn i="trash" off /><Btn i="cut" off /><Btn i="copy" /><Btn i="paste" off /><Btn i="undo" off /><Btn i="redo" off />
        <Grip />
        <Btn i="abcY" /><Btn i="diagram" />
        <div className="w-[6px] shrink-0" />
        <Btn i="abcPin" /><Btn i="abcRed" />
        <div className="ml-[6px] mr-[2px] h-[22px] w-px shrink-0 bg-[#ccc]" />
        <Btn i="abcG1" off /><Btn i="abcG2" off /><Btn i="abcG3" off /><Btn i="abcG4" off /><Btn i="abcG5" off />
        <Grip className="w-[18px]" />
        <Btn i="globeBin" />
        <Grip />
        <Btn i="py" />
        <Grip className="w-[16px]" />
        <Btn i="help" />
        <Grip className="w-[18px]" />
        <Grip />
        <Btn i="plug" /><Dd className="w-[11px]" /><Btn i="gearQ" /><Btn i="searchB" /><Btn i="full" />
      </Bar>
      <Bar className="h-[38px]">
        <Grip className="w-[12px]" />
        <Btn i="copyPts" /><Btn i="pin" /><Btn i="magDot" /><Btn i="magDots" /><Btn i="extent" /><Dd /><Btn i="globeG" /><Btn i="xy" off /><Btn i="wrench" />
        <Grip className="w-[18px]" />
        <div className="ml-[2px] flex h-[24px] w-[24px] shrink-0 items-center justify-center rounded-full bg-[#1f57c3] text-[10px] font-bold tracking-tight text-white">WKT</div>
        <Dd className="w-[20px]" />
      </Bar>

      {/* main */}
      <div className="flex min-h-0 flex-1">
        {/* left docks */}
        <div className="flex w-[412px] shrink-0 flex-col">
          <DockTitle title="浏览器" className="pl-[4px]" />
          <Tb className="pl-[3px]" items={["newBox", "refresh2", "filter", "up", "info"]} />
          <div className="flex h-[460px] shrink-0 border border-[#c3c3c3] bg-white">
            <div className="relative min-w-0 flex-1 overflow-hidden">
              {/* blurred out folders */}
              <div className="h-[185px] overflow-hidden pt-[4px] blur-[9px]">
                <div className="ml-[30px] h-[26px] w-[100px] bg-[#d4d4d4]" />
                <div className="ml-[45px] mt-[2px] h-[50px] w-[60px] bg-[#d4d4d4]" />
                <div className="ml-[50px] mt-[8px] h-[18px] w-[230px] bg-[#dcdcdc]" />
                <div className="ml-[60px] mt-[14px] h-[18px] w-[100px] bg-[#e0e0e0]" />
                <div className="ml-[60px] mt-[10px] h-[18px] w-[175px] bg-[#dadada]" />
                <div className="ml-[20px] mt-[10px] h-[18px] w-[100px] bg-[#e0e0e0]" />
              </div>
              <div className="h-[5px] pl-[68px]">
                <div className="h-[3px] w-[14px] border border-b-0 border-[#888]" />
              </div>
              <div className="flex h-[19px] items-center pl-[52px]">
                <Arrow open />
                <svg viewBox="0 0 16 14" className="ml-[6px] h-[14px] w-[15px]" fill="#fff" stroke="#888">
                  <path d="M1 4V1h5l2 3h7v9H1z" />
                </svg>
                <span className="ml-[7px] pt-px text-[12.5px]">geoparquet_demo</span>
              </div>
              <div className="flex h-[19px] items-center pl-[83px]">
                <svg viewBox="0 0 24 24" className="h-[16px] w-[16px]">{Py}</svg>
                <span className="ml-[6px] pt-px text-[12.5px]">gp_demo_make</span>
              </div>
              {["traffic_data.parquet", "traffic_data_append.parquet"].map((t, n) => (
                <div key={t} className={clsx("flex h-[19px] items-center pl-[67px]", n === 1 && "w-[296px] bg-[#f0f0f0]")}>
                  <Arrow />
                  <svg viewBox="0 0 16 16" className="ml-[6px] h-[15px] w-[15px]" fill="none" stroke="#888">
                    <path d="M2 3l3 11M7 3l7-1" />
                    <ellipse cx="9" cy="9" rx="4.5" ry="4" fill="#ddd" />
                  </svg>
                  <span className="ml-[8px] pt-px text-[12.3px]">{t}</span>
                </div>
              ))}
              <div className="mt-[4px] h-[187px] overflow-hidden blur-[9px]">
                <div className="ml-[50px] mt-[6px] h-[22px] w-[120px] bg-[#e2e2e2]" />
                <div className="ml-[70px] mt-[4px] h-[40px] w-[150px] bg-[#dadada]" />
                <div className="ml-[60px] mt-[2px] h-[18px] w-[130px] bg-[#e2e2e2]" />
                <div className="ml-[70px] mt-[10px] h-[22px] w-[130px] bg-[#dedede]" />
                <div className="ml-[80px] mt-[10px] h-[26px] w-[70px] bg-[#e0e0e0]" />
                <div className="ml-[80px] mt-[10px] h-[26px] w-[100px] bg-[#dedede]" />
              </div>
              <div className="absolute left-[48px] top-[190px] h-[79px] w-[250px] border border-[#e0202a]" />
            </div>
            <VScroll>
              <div className="h-[59px] bg-[#e6e6e6]" />
              <div className="h-[157px] bg-white" />
              <div className="flex-1 bg-[#e6e6e6]" />
            </VScroll>
          </div>
          <div className="h-[5px] shrink-0" />
          <DockTitle title="图层" className="pl-[4px]" />
          <Tb className="pl-[3px]" items={["brush", "addGroup", "eye", "filter", "expr", 1, "down", "up", "remove"]} />
          <div className="flex-1 border border-[#c3c3c3] bg-white">
            <div className="flex h-[19px] items-center bg-[#f0f0f0] pl-[24px]">
              <div className="flex h-[13px] w-[13px] items-center justify-center border border-[#999] bg-white">
                <Check size={11} strokeWidth={3} />
              </div>
              <div className="ml-[12px] h-[6px] w-[6px] rounded-full bg-[#7c4f8e]" />
              <span className="ml-[8px] pt-px text-[12.5px] font-bold underline">traffic_data_append</span>
            </div>
          </div>
        </div>

        {/* centre */}
        <div className="ml-[7px] flex w-[1083px] shrink-0 flex-col pt-[2px]">
          <div className="relative h-[518px] shrink-0 border border-[#c8c8c8] bg-white">
            {POINTS.map(([x, y]) => (
              <div key={x} className="absolute h-[8px] w-[8px] rounded-full border border-[#4a2a5c] bg-[#8a4f9e]" style={{ left: x - 4, top: y - 4 }} />
            ))}
            <div className="absolute left-[720px] top-[202px] h-[47px] w-[47px] border border-[#e0202a]" />
            <div className="absolute left-[738px] top-[220px] h-[11px] w-[11px] rounded-full bg-[#e60f0f]" />
          </div>
          <div className="h-[4px] shrink-0" />
          <DockTitle title="traffic_data_append — 要素合计: 12, 过滤: 12, 选择: 1" className="pl-[7px]" />
          <Tb className="pl-[1px]" items={["~pencil", "~tblPen", "~saveEd", "refresh2", 0, "~copyG", 0, "exprY", "bars", "invert", "deselect", "filter", "moveSel", "panSel", "zoomSel", 0, "~newCol", "~delCol", "calcPen", "calc", 0, "cols", 0, "magCur", "!tblDock"]} />
          <div className="relative mt-px flex h-[237px] shrink-0 border-b border-[#c3c3c3]">
            <div className="min-w-0 flex-1 bg-white">
              <div className="flex h-[21px] items-center border-y border-[#c8c8c8] border-b-[#aaa] bg-[#f0f0f0] pt-px text-center text-[12.5px]">
                <div className="w-[18px] shrink-0" />
                <div className="w-[100px] border-r border-[#bbb]">sensor_id</div>
                <div className="w-[100px] border-r border-[#bbb]">traffic_flow</div>
                <div className="w-[100px]">timestamp</div>
              </div>
              <div className="flex h-[5px] text-[12px]">
                <div className="w-[18px] border-r border-[#ccc] bg-[#f0f0f0]" />
                <div className="w-[300px] border-r border-[#ccc] bg-white" />
              </div>
              {TABLE.map(([n, s, v], r) => {
                const sel = n === "11";
                return (
                  <div key={n} className={clsx("flex h-[30px] items-center text-[12.5px]", sel ? "bg-[#0078d7] text-white" : r % 2 === 0 || n === "12" ? "bg-[#e8e6e3]" : "bg-white")}>
                    <div className="flex h-full w-[18px] items-center justify-center border-y border-r border-[#d2d2d2] bg-[#f0f0f0] pt-[2px] text-[#111]">{n}</div>
                    <div className="flex h-full w-[100px] items-center border-r border-b border-[#d2d2d2] pl-[3px] pt-[2px]">{s}</div>
                    <div className="flex h-full w-[100px] items-center justify-end border-r border-b border-[#d2d2d2] pr-[3px] pt-[2px]">{v}</div>
                    <div className="flex h-full w-[100px] items-center border-r border-b border-[#d2d2d2] pl-[3px] pt-[2px]">2024-10-22T0...</div>
                    <div className="h-full flex-1 bg-white" />
                  </div>
                );
              })}
            </div>
            <VScroll>
              <div className="h-[85px] bg-[#e6e6e6]" />
              <div className="flex-1 bg-white" />
            </VScroll>
            <div className="absolute left-[-3px] top-[176px] h-[61px] w-[341px] border border-[#e0202a]" />
          </div>
          <div className="flex items-start justify-between pl-[3px] pr-[3px] pt-[4px]">
            <div className="relative flex h-[23px] w-[111px] items-center gap-[3px] rounded-[3px] border border-[#c3c3c3] bg-[#f7f7f7] pl-[3px] text-[12.5px]">
              <Ico i="table" className="h-[15px] w-[15px]" />
              显示所有要素
              <div className="absolute bottom-[3px] right-[2px] h-0 w-0 border-x-[3px] border-t-[3px] border-x-transparent border-t-[#555]" />
            </div>
            <div className="flex items-center gap-[4px]">
              <Ico i="tblForm" className="h-[18px] w-[18px]" />
              <div className="flex h-[23px] w-[23px] items-center justify-center rounded-sm border border-[#bbb] bg-[#dcdcdc]">
                <Ico i="table" className="h-[17px] w-[17px]" />
              </div>
            </div>
          </div>
        </div>

        {/* right docks */}
        <div className="ml-[5px] flex min-w-0 flex-1 flex-col">
          <DockTitle title="工具箱" className="pl-[5px]" />
          <Tb className="pl-[4px]" items={["procs", "py", "clock", "page", 0, "tipPen", 0, "wrench"]} />
          <div className="mt-px flex h-[21px] shrink-0 items-center gap-[6px] rounded-[3px] border border-[#c3c3c3] bg-white pl-[8px] text-[#888]">
            <Search size={13} stroke="#888" />
            <span className="text-[12.5px]">搜索...</span>
          </div>
          <div className="flex h-[148px] shrink-0 border border-[#c3c3c3] bg-white">
            <div className="min-w-0 flex-1 overflow-hidden">
              {TOOLBOX.map(([t, q]) => (
                <div key={t} className="flex h-[19px] shrink-0 items-center pl-[7px] text-[12px]">
                  <Arrow />
                  <div className="ml-[9px] flex w-[17px] justify-center">
                    {q ? <svg viewBox="0 0 24 24" className="h-[17px] w-[17px]">{Qg}</svg> : <Ico i="clock" className="h-[16px] w-[16px]" />}
                  </div>
                  <span className="ml-[4px]">{t}</span>
                </div>
              ))}
            </div>
            <VScroll>
              <div className="h-[28px] bg-white" />
              <div className="flex-1 bg-[#e6e6e6]" />
            </VScroll>
          </div>
          <div className="h-[6px] shrink-0" />
          <DockTitle title="识别结果" className="pl-[5px]" />
          <Tb className="pl-[4px]" items={["collapse", 0, "down", "up", "starD", 0, "deselect", 0, "~copyG", "~print", 0, "identSel", 1, "wrench", 0, "help"]} />
          <div className="flex h-[498px] shrink-0 flex-col border border-[#c3c3c3] bg-white text-[12.5px]">
            <div className="flex h-[20px] shrink-0 border-b border-[#b5b5b5] bg-[#f4f4f4] leading-[19px]">
              <div className="w-[100px] border-r border-[#ccc] pl-[2px]">要素</div>
              <div className="pl-[2px]">值</div>
            </div>
            <div className="flex h-[18px] shrink-0 items-center pl-[2px] pt-px font-semibold">
              <Arrow open />
              <span className="ml-[5px]">traffic_data_append</span>
              <span className="ml-[9px]">[3]</span>
            </div>
            {RESULTS.map((r, n) => (
              <div key={n} className={clsx("flex h-[17px] shrink-0 items-center", r.sel ? "bg-[#0078d7] text-white" : n % 2 === 0 ? "bg-[#e8e6e3]" : "bg-white")}>
                <div className={clsx("flex h-full w-[100px] shrink-0 items-center", r.sel && "relative")}>
                  {r.sel && <div className="absolute bottom-0 left-[24px] right-0 top-0 bg-[#1f88de]" />}
                  {r.arrow === 1 ? (
                    <>
                      <Arrow open light className="ml-[14px]" />
                      <span className="relative ml-[5px] pt-px">{r.label}</span>
                    </>
                  ) : r.arrow === 2 ? (
                    <>
                      <Arrow className="ml-[25px]" />
                      <span className="ml-[6px] pt-px">{r.label}</span>
                    </>
                  ) : (
                    <span className="ml-[40px] pt-px">{r.label}</span>
                  )}
                </div>
                <span className="pl-[4px] pt-px">{r.value}</span>
              </div>
            ))}
          </div>
          <div className="mt-[6px] flex h-[22px] shrink-0 items-center pl-[5px] pr-[6px] text-[12.5px]">
            <span className="w-[31px]">模式</span>
            <div className="flex h-[22px] flex-1 items-center justify-between rounded-[3px] border border-[#c3c3c3] bg-[#f7f7f7] pl-[3px] pr-[4px]">
              从上往下
              <div className="h-0 w-0 border-x-[3.5px] border-t-[4px] border-x-transparent border-t-[#555]" />
            </div>
          </div>
          <div className="mt-[10px] flex h-[21px] shrink-0 items-center pl-[5px] text-[12.5px] text-[#888]">
            <span className="w-[31px]">视图</span>
            <div className="flex h-[21px] w-[71px] items-center justify-between rounded-[3px] border border-[#d0d0d0] pl-[3px] pr-[9px]">
              树
              <div className="h-0 w-0 border-x-[3.5px] border-t-[4px] border-x-transparent border-t-[#aaa]" />
            </div>
          </div>
        </div>
      </div>

      {/* status bar */}
      <div className="flex h-[28px] shrink-0 items-center text-[12px]">
        <div className="ml-[4px] flex h-[21px] w-[200px] items-center gap-[5px] rounded-[3px] border border-[#c3c3c3] bg-white pl-[7px] text-[#888]">
          <Search size={13} />
          <span>搜索</span>
          <span className={mono}>(Ctrl+K)</span>
        </div>
        <span className="ml-[8px]">识别完成。</span>
        <span className="ml-auto">坐标</span>
        <div className={clsx("ml-px flex h-[21px] w-[144px] items-center rounded-[3px] border border-[#c3c3c3] bg-white pl-[3px]", mono)}>39.90617° , 116.43564°</div>
        <Ico i="noRender" className="ml-[3px] h-[18px] w-[18px]" />
        <span className="ml-[13px]">比例</span>
        <div className={clsx("ml-[2px] flex h-[21px] w-[81px] items-center justify-between rounded-[3px] border border-[#c3c3c3] bg-white pl-[3px]", mono)}>
          1:16514
          <div className="flex h-full w-[19px] items-center justify-center border-l border-[#ddd]">
            <div className="h-0 w-0 border-x-[3.5px] border-t-[4px] border-x-transparent border-t-[#555]" />
          </div>
        </div>
        <Lock size={16} className="ml-[11px]" fill="#666" stroke="#666" />
        <span className="ml-[7px]">放大镜</span>
        <div className={clsx("ml-px flex h-[21px] w-[88px] items-center justify-between rounded-[3px] border border-[#c3c3c3] bg-white pl-[3px]", mono)}>
          100%
          <Spin />
        </div>
        <span className="ml-[9px]">旋转角度</span>
        <div className={clsx("ml-[5px] flex h-[21px] w-[90px] items-center justify-between rounded-[3px] border border-[#c3c3c3] bg-white pl-[3px]", mono)}>
          0.0°
          <Spin />
        </div>
        <div className="ml-[6px] flex h-[14px] w-[14px] items-center justify-center border border-[#999] bg-white">
          <Check size={12} strokeWidth={3} />
        </div>
        <span className="ml-[5px]">渲染</span>
        <Ico i="globeG" className="ml-[13px] h-[15px] w-[15px]" />
        <span className={clsx("ml-[2px]", mono)}>EPSG:4326</span>
        <MessageCircleMore size={18} className="ml-[28px] mr-[6px]" fill="#444" stroke="#fff" strokeWidth={1.2} />
      </div>
    </div>
  );
};

export default App;
